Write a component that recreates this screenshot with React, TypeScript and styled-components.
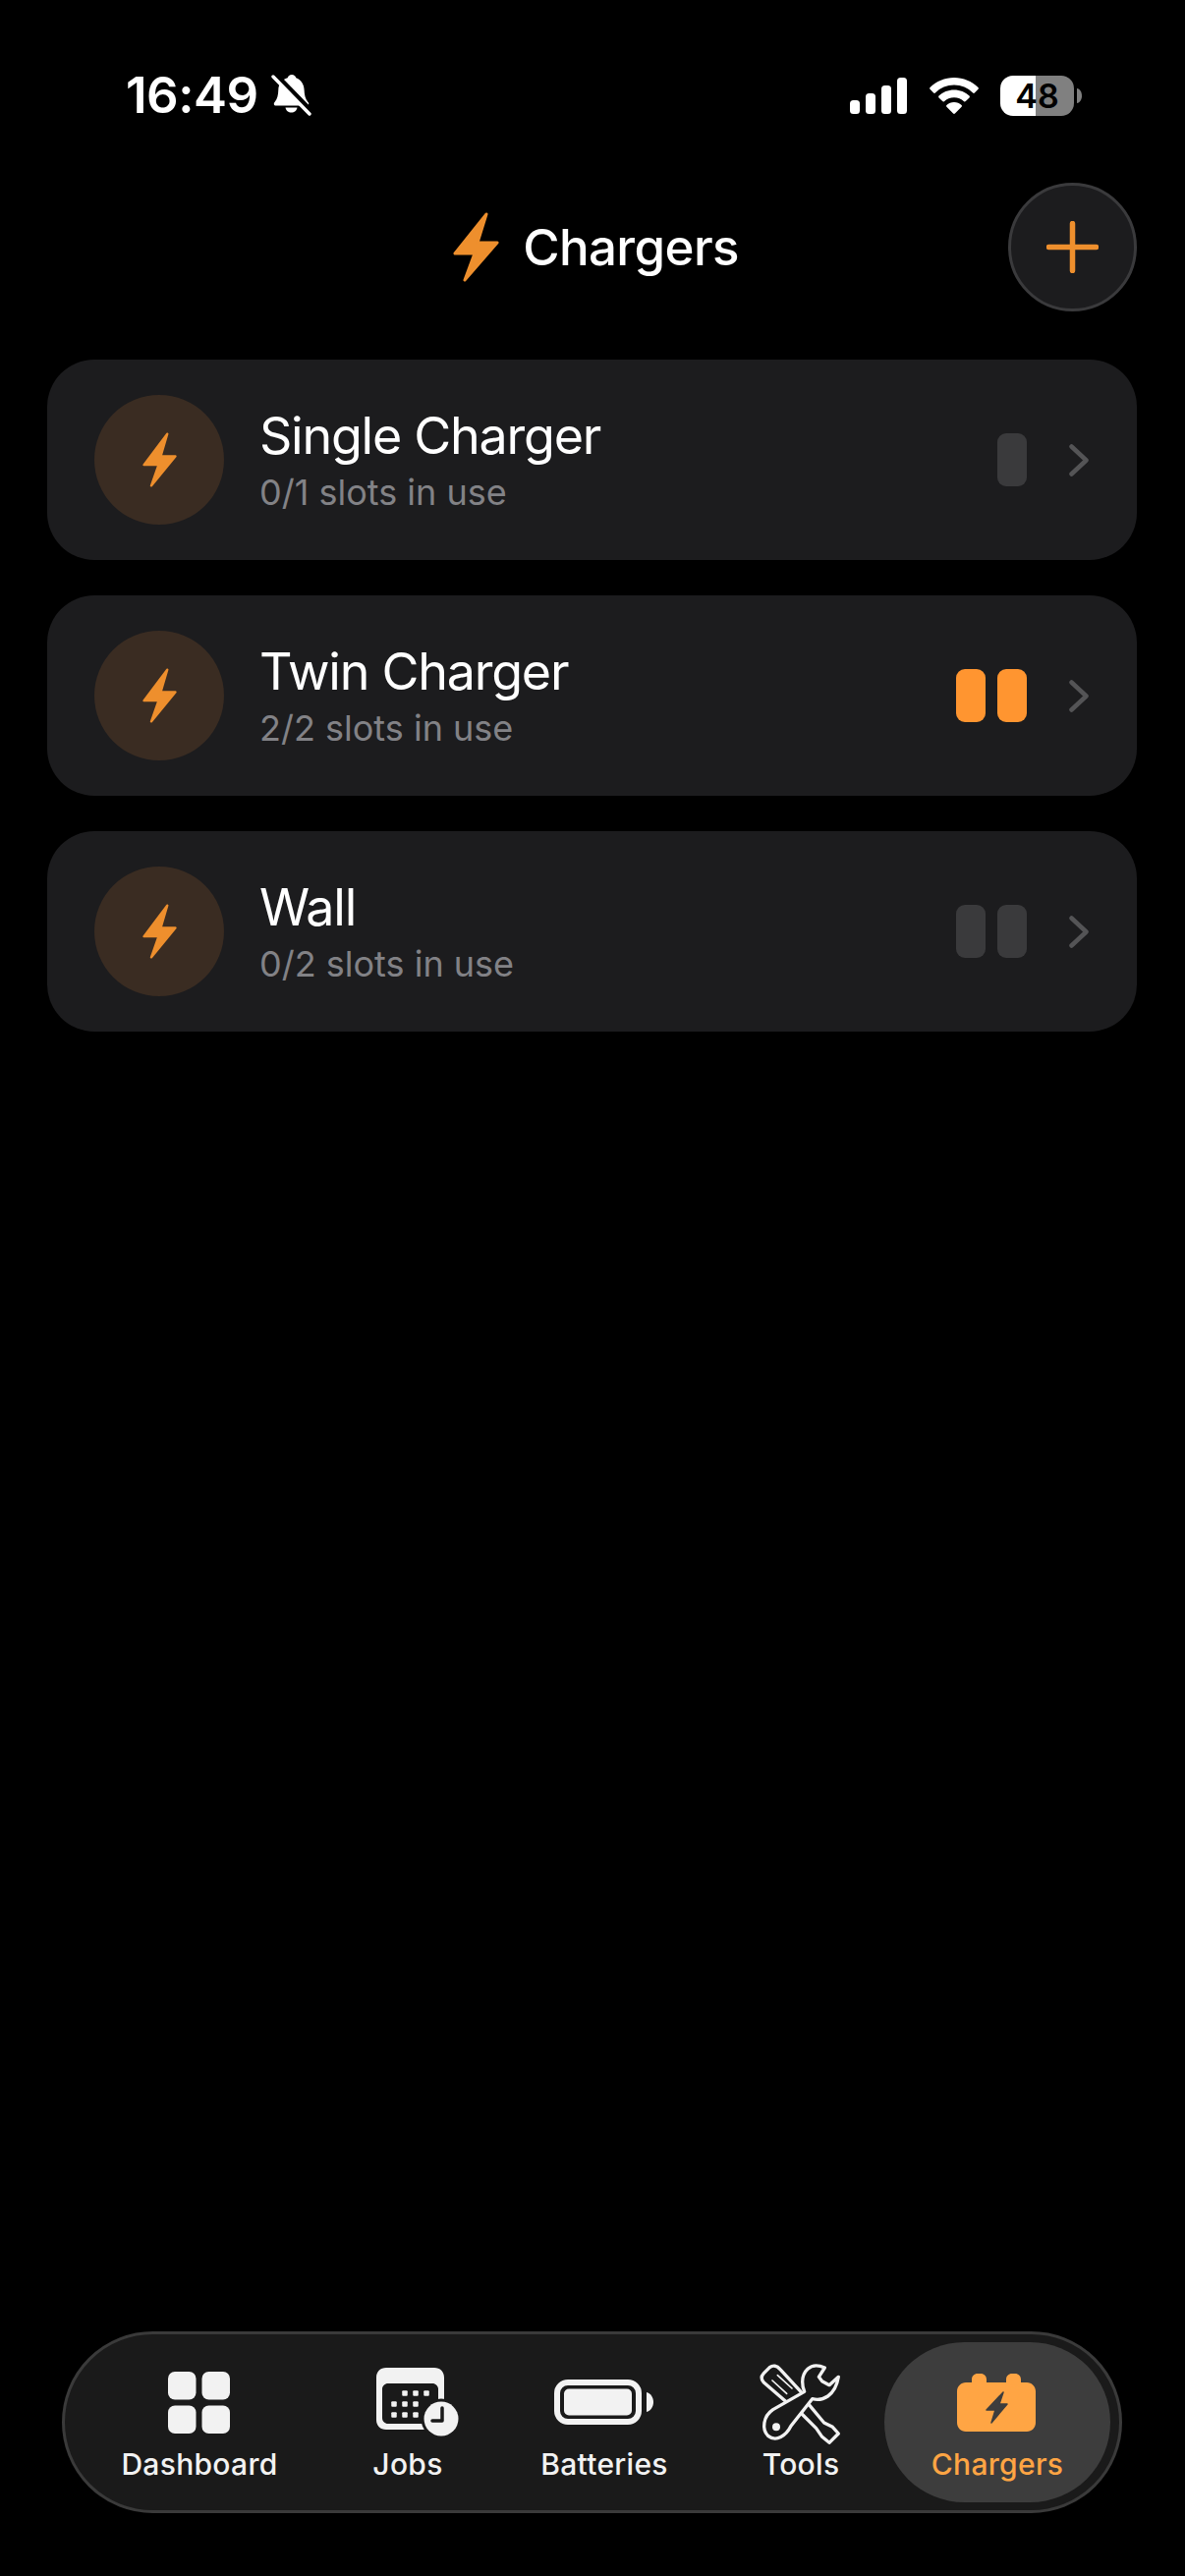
import React from "react";
import styled, { createGlobalStyle } from "styled-components";

const Global = createGlobalStyle`
  html, body { margin: 0; padding: 0; background: #000; }
  body { font-family: Inter, "Noto Sans", "Liberation Sans", sans-serif; color: #fff; }
`;

const Page = styled.div`
  min-height: 2622px;
  display: flex;
  flex-direction: column;
  background: #000;
`;

const StatusBar = styled.div`
  height: 186px;
  box-sizing: border-box;
  padding: 71px 105px 0 128px;
  display: flex;
  align-items: flex-start;
  justify-content: space-between;
`;

const StatusLeft = styled.div`
  display: flex;
  align-items: center;
  gap: 13px;
  height: 52px;
`;

const Clock = styled.span`
  font-size: 51px;
  font-weight: 600;
  line-height: 52px;
  letter-spacing: -0.5px;
`;

const StatusRight = styled.div`
  display: flex;
  align-items: center;
  height: 52px;
  gap: 22.5px;
`;

const BatteryWrap = styled.div`
  display: flex;
  align-items: center;
  gap: 3px;
`;

const BatteryBody = styled.div`
  width: 75px;
  height: 41px;
  border-radius: 13px;
  background: linear-gradient(90deg, #fff 0 48%, #808080 48% 100%);
  color: #000;
  font-size: 34px;
  font-weight: 600;
  line-height: 41px;
  text-align: center;
`;

const Header = styled.header`
  display: grid;
  grid-template-columns: 1fr auto 1fr;
  align-items: center;
  padding: 0 49px 0 48px;
  margin-bottom: 49px;
`;

const TitleGroup = styled.div`
  grid-column: 2;
  display: flex;
  align-items: center;
  gap: 24px;
  margin-left: 8px;
`;

const Title = styled.h1`
  margin: 0;
  font-size: 51px;
  font-weight: 500;
  line-height: 60px;
  letter-spacing: -0.6px;
`;

const AddButton = styled.button`
  grid-column: 3;
  justify-self: end;
  width: 131px;
  height: 131px;
  padding: 0;
  box-sizing: border-box;
  border-radius: 50%;
  background: #1c1c1e;
  border: 3px solid #3a3a3c;
  display: flex;
  align-items: center;
  justify-content: center;
`;

const CardList = styled.div`
  display: flex;
  flex-direction: column;
  gap: 36px;
  padding: 0 49px 0 48px;
`;

const Card = styled.div`
  height: 204px;
  box-sizing: border-box;
  border-radius: 48px;
  background: #1c1c1e;
  padding: 0 49px 0 48px;
  display: flex;
  align-items: center;
`;

const IconCircle = styled.div`
  width: 132px;
  height: 132px;
  border-radius: 50%;
  background: #3a2c22;
  display: flex;
  align-items: center;
  justify-content: center;
  flex-shrink: 0;
  margin-right: 36px;
`;

const CardText = styled.div`
  flex: 1;
  min-width: 0;
  display: flex;
  flex-direction: column;
`;

const CardName = styled.div`
  font-size: 52px;
  font-weight: 400;
  line-height: 60px;
  letter-spacing: -1.25px;
  margin-top: 1px;
`;

const CardSub = styled.div`
  font-size: 36px;
  font-weight: 400;
  line-height: 44px;
  color: #828286;
  margin-top: 5px;
  letter-spacing: 0;
`;

const Slots = styled.div`
  display: flex;
  gap: 12px;
  margin-right: 43px;
`;

const Slot = styled.div<{ $on: boolean }>`
  width: 30px;
  height: 54px;
  border-radius: 9px;
  background: ${(p) => (p.$on ? "#ff9530" : "#3a3a3c")};
`;

const Nav = styled.nav`
  margin: auto 64px 64px 63px;
  height: 185px;
  box-sizing: border-box;
  border-radius: 93px;
  background: #1a1a1a;
  border: 3px solid #3a3a3a;
  padding: 8px 9px 8px 10px;
  display: grid;
  grid-template-columns: 254px 170px 230px 170px 230px;
`;

const NavItem = styled.div<{ $active?: boolean }>`
  display: flex;
  flex-direction: column;
  align-items: center;
  padding-top: 21px;
  border-radius: 82px;
  background: ${(p) => (p.$active ? "#3d3d3d" : "transparent")};
  color: ${(p) => (p.$active ? "#ffa544" : "#f2f2f2")};
`;

const NavIcon = styled.div<{ $nudge: number }>`
  height: 80px;
  margin-left: ${(p) => p.$nudge}px;
  display: flex;
  align-items: center;
  justify-content: center;
`;

const NavLabel = styled.span`
  margin-top: 5px;
  font-size: 30px;
  font-weight: 500;
  line-height: 36px;
  letter-spacing: 0.3px;
`;

const BoltIcon = ({ w, h, color = "#ee8f2d" }: { w: number; h: number; color?: string }) => (
  <svg width={w} height={h} viewBox="0 0 47 71" preserveAspectRatio="none">
    <path
      d="M34 2 L2 42 L22 42 L12 69 L45 31 L25 31 Z"
      fill={color}
      stroke={color}
      strokeWidth={3}
      strokeLinejoin="round"
    />
  </svg>
);

const MuteBell = () => (
  <svg width={41} height={42} viewBox="0 0 41 42">
    <path
      d="M21 0c-2.200 0-3.900 1.400-4.300 3.300C11 5 7.500 9.500 7.300 15.500c-.2 5-.8 9-3.800 12.500-1.200 1.500-1 3.500 1.500 3.500h31c2.500 0 2.800-2 1.500-3.500-3-3.500-3.700-7.500-3.900-12.500-.2-6-3.600-10.500-8.300-12.200C24.900 1.400 23.200 0 21 0z"
      fill="#fff"
    />
    <path d="M14.500 33.500h12c-.5 3-3 5-6 5s-5.500-2-6-5z" fill="#fff" />
    <path d="M3 -1 L42 39" stroke="#000" strokeWidth={6} />
    <path d="M2 2 L39 40" stroke="#fff" strokeWidth={3.400} strokeLinecap="round" />
  </svg>
);

const SignalBars = () => (
  <svg width={58} height={37} viewBox="0 0 58 37" fill="#fff">
    <rect x={0} y={23} width={10} height={14} rx={3.500} />
    <rect x={16} y={16} width={10} height={21} rx={3.500} />
    <rect x={32} y={8} width={10} height={29} rx={3.500} />
    <rect x={48} y={0} width={10} height={37} rx={3.500} />
  </svg>
);

const Wifi = () => (
  <svg width={50} height={37} viewBox="0 0 50 37" fill="#fff">
    <path d="M25 0C15.500 0 7 3.700 .500 10c-.5.5-.5 1.300 0 1.800l3.600 3.700c.5.500 1.300.500 1.800 0C11 10.500 17.700 7.600 25 7.600s14 2.900 19.100 7.900c.5.500 1.300.500 1.800 0l3.600-3.700c.5-.5.5-1.300 0-1.800C43 3.700 34.500 0 25 0z" />
    <path d="M25 12.500c-6 0-11.400 2.300-15.500 6.100-.5.500-.5 1.300 0 1.800l3.700 3.700c.5.500 1.200.500 1.700.1 2.700-2.400 6.200-3.900 10.100-3.900s7.400 1.500 10.100 3.900c.5.400 1.200.400 1.700-.1l3.700-3.700c.5-.5.5-1.300 0-1.800C36.400 14.800 31 12.500 25 12.500z" />
    <path d="M25 25c-2.900 0-5.600 1.100-7.600 3-.5.500-.5 1.200 0 1.700l6.700 6.800c.5.500 1.300.500 1.800 0l6.700-6.800c.5-.5.5-1.200 0-1.700-2-1.900-4.700-3-7.600-3z" />
  </svg>
);

const BatteryNub = () => (
  <svg width={5} height={15} viewBox="0 0 5 15">
    <path d="M0 0c3 .5 5 3.500 5 7.500S3 14.500 0 15z" fill="#808080" />
  </svg>
);

const Plus = () => (
  <svg width={53} height={53} viewBox="0 0 53 53">
    <path d="M26.500 2.500V50.500M2.500 26.500H50.500" stroke="#ee8f2d" strokeWidth={5.500} strokeLinecap="round" />
  </svg>
);

const Chevron = () => (
  <svg width={20} height={33} viewBox="0 0 20 33">
    <path d="M2.500 2.500 L17.500 16.500 L2.500 30.500" fill="none" stroke="#545456" strokeWidth={4.500} strokeLinecap="round" strokeLinejoin="round" />
  </svg>
);

const GridIcon = () => (
  <svg width={63} height={63} viewBox="0 0 63 63" fill="currentColor">
    <rect x={0} y={0} width={28.500} height={28.500} rx={7} />
    <rect x={34.500} y={0} width={28.500} height={28.500} rx={7} />
    <rect x={0} y={34.500} width={28.500} height={28.500} rx={7} />
    <rect x={34.500} y={34.500} width={28.500} height={28.500} rx={7} />
  </svg>
);

const jobDots = [
  [29, 26], [40, 26], [51, 26],
  [18, 37], [29, 37], [40, 37],
  [18, 48], [29, 48], [40, 48],
];

const JobsIcon = () => (
  <svg width={84} height={70} viewBox="0 0 84 70">
    <path
      fillRule="evenodd"
      fill="currentColor"
      d="M10 0H59C65 0 69 4 69 10V53C69 59 65 63 59 63H10C4 63 0 59 0 53V10C0 4 4 0 10 0ZM12 16C8.700 16 6 18.500 6 21.500V51C6 54.500 8.700 57 12 57H57C60.300 57 63 54.500 63 51V21.500C63 18.500 60.300 16 57 16Z"
    />
    <g fill="currentColor">
      {jobDots.map(([x, y]) => (
        <rect key={`${x}-${y}`} x={x - 2.750} y={y - 2.750} width={5.500} height={5.500} rx={1} />
      ))}
    </g>
    <circle cx={66} cy={52} r={20.500} fill="#1a1a1a" />
    <circle cx={66} cy={52} r={17.500} fill="currentColor" />
    <path d="M67 41V54H57" fill="none" stroke="#1a1a1a" strokeWidth={3.500} strokeLinecap="round" strokeLinejoin="round" />
  </svg>
);

const BatteryIcon = () => (
  <svg width={101} height={46} viewBox="0 0 101 46" fill="none">
    <rect x={3} y={3} width={83} height={40} rx={11} stroke="currentColor" strokeWidth={6} />
    <rect x={10} y={9.500} width={69} height={27} rx={5} fill="currentColor" />
    <path d="M94 13c4 1 7 5 7 10s-3 9-7 10z" fill="currentColor" />
  </svg>
);

const ToolsIcon = () => (
  <svg width={92} height={90} viewBox="0 -3 276 270" fill="none" stroke="currentColor" strokeWidth={10} strokeLinejoin="round" strokeLinecap="round">
    <path d="M135 100 L72 32 C62 20 50 18 40 26 L22 44 C13 54 14 64 22 72 L95 135" />
    <path d="M48 66 L92 106 M64 50 L108 90" strokeWidth={5} />
    <path d="M135 165 L182 212 L200 238 L222 256 L250 228 L232 208 L206 195 L160 140" />
    <path
      d="M146 100 L50 155 C20 175 15 215 35 235 C60 255 90 235 105 205 L170 122 C200 130 240 115 250 55 L222 80 L200 68 L190 55 L208 27 C160 5 140 45 140 70 C140 82 142 92 146 100 Z"
      fill="#1a1a1a"
    />
    <circle cx={60} cy={208} r={12} fill="currentColor" stroke="none" />
  </svg>
);

const ChargerIcon = () => (
  <svg width={80} height={59} viewBox="0 0 80 59">
    <path
      fill="currentColor"
      d="M15 6C15 2.500 17.500 0 21 0H24C27.500 0 30 2.500 30 6V9H50V6C50 2.500 52.500 0 56 0H59C62.500 0 65 2.500 65 6V9H71C76 9 80 13 80 18V50C80 55 76 59 71 59H9C4 59 0 55 0 50V18C0 13 4 9 9 9H15Z"
    />
    <path d="M47 19 L30 37 L39 37 L35 50 L51 31 L43 31 Z" fill="#3d3d3d" stroke="#3d3d3d" strokeWidth={1.500} strokeLinejoin="round" />
  </svg>
);

type Charger = { name: string; used: number; total: number };

const chargers: Charger[] = [
  { name: "Single Charger", used: 0, total: 1 },
  { name: "Twin Charger", used: 2, total: 2 },
  { name: "Wall", used: 0, total: 2 },
];

const navItems = [
  { label: "Dashboard", icon: <GridIcon />, nudge: -2 },
  { label: "Jobs", icon: <JobsIcon />, nudge: 20 },
  { label: "Batteries", icon: <BatteryIcon />, nudge: -1 },
  { label: "Tools", icon: <ToolsIcon />, nudge: 2 },
  { label: "Chargers", icon: <ChargerIcon />, nudge: -2, active: true },
];

export default function App() {
  return (
    <Page>
      <Global />
      <StatusBar>
        <StatusLeft>
          <Clock>16:49</Clock>
          <MuteBell />
        </StatusLeft>
        <StatusRight>
          <SignalBars />
          <Wifi />
          <BatteryWrap>
            <BatteryBody>48</BatteryBody>
            <BatteryNub />
          </BatteryWrap>
        </StatusRight>
      </StatusBar>
      <Header>
        <TitleGroup>
          <BoltIcon w={47} h={71} />
          <Title>Chargers</Title>
        </TitleGroup>
        <AddButton aria-label="Add charger">
          <Plus />
        </AddButton>
      </Header>
      <CardList>
        {chargers.map((c) => (
          <Card key={c.name}>
            <IconCircle>
              <BoltIcon w={35} h={56} />
            </IconCircle>
            <CardText>
              <CardName>{c.name}</CardName>
              <CardSub>
                {c.used}/{c.total} slots in use
              </CardSub>
            </CardText>
            <Slots>
              {Array.from({ length: c.total }, (_, i) => (
                <Slot key={i} $on={i < c.used} />
              ))}
            </Slots>
            <Chevron />
          </Card>
        ))}
      </CardList>
      <Nav>
        {navItems.map((n) => (
          <NavItem key={n.label} $active={n.active}>
            <NavIcon $nudge={n.nudge}>{n.icon}</NavIcon>
            <NavLabel>{n.label}</NavLabel>
          </NavItem>
        ))}
      </Nav>
    </Page>
  );
}
